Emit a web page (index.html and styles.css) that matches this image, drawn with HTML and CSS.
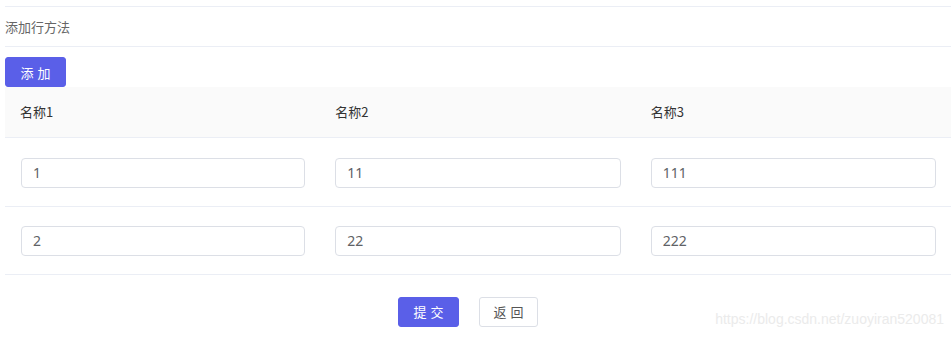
FILE: index.html
```
<!DOCTYPE html>
<html lang="zh-CN">
<head>
    <meta charset="UTF-8" />
    <title>添加行方法</title>
    <link rel="stylesheet" href="styles.css">
</head>
<body>
    <section class="panel">
        <header class="panel-head">添加行方法</header>
        <div class="panel-body">
            <button class="btn btn-primary btn-add">添加</button>
            <table class="grid">
                <thead>
                    <tr>
                        <th>名称1</th>
                        <th>名称2</th>
                        <th>名称3</th>
                    </tr>
                </thead>
                <tbody>
                    <tr>
                        <td><input class="field" type="text" value="1"></td>
                        <td><input class="field" type="text" value="11"></td>
                        <td><input class="field" type="text" value="111"></td>
                    </tr>
                    <tr>
                        <td><input class="field" type="text" value="2"></td>
                        <td><input class="field" type="text" value="22"></td>
                        <td><input class="field" type="text" value="222"></td>
                    </tr>
                </tbody>
            </table>
            <div class="actions">
                <button class="btn btn-primary">提交</button>
                <button class="btn btn-default">返回</button>
            </div>
        </div>
    </section>
    <p class="watermark">https://blog.csdn.net/zuoyiran520081</p>
</body>
</html>
```
FILE: styles.css
```
* {
    padding: 0;
    margin: 0;
    box-sizing: border-box;
}
:root {
    --color-1: #5a5fe8; /* bleu des boutons */
    --color-2: #ebeef5; /* traits */
    --color-3: #fafafa; /* fond de l'en-tête du tableau */
}
body {
    width: 100%;
    height: 100vh;
    background: white;
    font-family: "Noto Sans CJK SC", "Liberation Sans", sans-serif;
    font-size: 13px;
    color: #333;
    position: relative;
    overflow: hidden;
}
.panel {
    margin: 6px 0 0 5px;
    border-top: 1px solid var(--color-2);
}
.panel-head {
    height: 40px;
    line-height: 40px;
    color: #666;
    border-bottom: 1px solid var(--color-2);
}
.panel-body {
    padding-top: 10px;
}
.btn {
    height: 30px;
    border-radius: 3px;
    font-family: inherit;
    font-size: 13px;
    letter-spacing: 4px;
    cursor: pointer;
}
.btn-primary {
    background: var(--color-1);
    border: 1px solid var(--color-1);
    color: white;
    width: 61px;
    padding-left: 4px;
}
.btn-default {
    background: white;
    border: 1px solid #dcdfe6;
    color: #555;
    width: 59px;
    padding-left: 4px;
}
.btn-add {
    display: block;
}
/* le tableau */
.grid {
    width: 100%;
    border-collapse: collapse;
    table-layout: fixed;
}
.grid th {
    height: 50px;
    padding: 0 15px;
    text-align: left;
    font-weight: normal;
    color: #333;
    background: var(--color-3);
    border-bottom: 1px solid var(--color-2);
}
.grid td {
    padding: 19px 15px 18px 15px;
    border-bottom: 1px solid var(--color-2);
}
.grid tbody tr:first-child td {
    padding-top: 20px;
}
.grid td:first-child {
    padding-left: 16px;
}
.field {
    display: block;
    width: 100%;
    height: 30px;
    padding: 0 11px;
    border: 1px solid #dcdfe6;
    border-radius: 4px;
    font-family: "Noto Sans", "Liberation Sans", sans-serif;
    font-size: 14px;
    color: #606266;
    outline: none;
}
.actions {
    display: flex;
    justify-content: center;
    gap: 20px;
    padding: 22px 20px 0 0;
}
/* filigrane en bas à droite */
.watermark {
    position: absolute;
    right: 7px;
    top: 311px;
    font-family: "Liberation Sans", Arial, sans-serif;
    font-size: 14px;
    color: #ebebeb;
}
```
